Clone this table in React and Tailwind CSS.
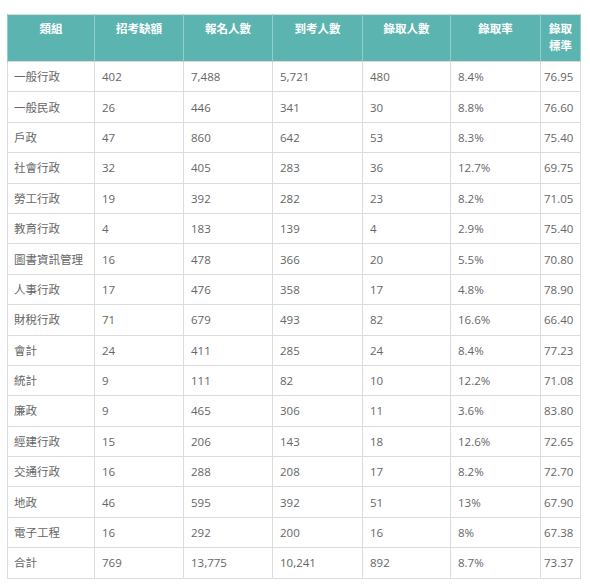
const rows = [
  ["一般行政", "402", "7,488", "5,721", "480", "8.4%", "76.95"],
  ["一般民政", "26", "446", "341", "30", "8.8%", "76.60"],
  ["戶政", "47", "860", "642", "53", "8.3%", "75.40"],
  ["社會行政", "32", "405", "283", "36", "12.7%", "69.75"],
  ["勞工行政", "19", "392", "282", "23", "8.2%", "71.05"],
  ["教育行政", "4", "183", "139", "4", "2.9%", "75.40"],
  ["圖書資訊管理", "16", "478", "366", "20", "5.5%", "70.80"],
  ["人事行政", "17", "476", "358", "17", "4.8%", "78.90"],
  ["財稅行政", "71", "679", "493", "82", "16.6%", "66.40"],
  ["會計", "24", "411", "285", "24", "8.4%", "77.23"],
  ["統計", "9", "111", "82", "10", "12.2%", "71.08"],
  ["廉政", "9", "465", "306", "11", "3.6%", "83.80"],
  ["經建行政", "15", "206", "143", "18", "12.6%", "72.65"],
  ["交通行政", "16", "288", "208", "17", "8.2%", "72.70"],
  ["地政", "46", "595", "392", "51", "13%", "67.90"],
  ["電子工程", "16", "292", "200", "16", "8%", "67.38"],
  ["合計", "769", "13,775", "10,241", "892", "8.7%", "73.37"],
];

const widths = ["w-[87px]", "w-[89px]", "w-[89px]", "w-[90px]", "w-[88px]", "w-[90px]", "w-[40px]"];

export default function App() {
  return (
    <div className="bg-white w-[590px] h-[588px] pt-[14px] pl-[7px]" style={{ fontFamily: '"Open Sans", "Noto Sans CJK TC", sans-serif' }}>
      <table className="border-collapse table-fixed w-[574px] border border-[#dcdcdc]">
        <colgroup>
          {widths.map((w, i) => (
            <col key={i} className={w} />
          ))}
        </colgroup>
        <thead>
          <tr className="bg-[#5bb4b0] text-white text-[11.5px] leading-[17px] font-semibold">
            {["類組", "招考缺額", "報名人數", "到考人數", "錄取人數", "錄取率"].map((h) => (
              <th key={h} className="align-top pt-[5px] pb-[7px] px-1 font-semibold border-x border-[#8fd0cc] text-center">
                {h}
              </th>
            ))}
            <th className="align-top pt-[5px] pb-[7px] px-0 font-semibold border-x border-[#8fd0cc] text-center">
              錄取
              <br />
              標準
            </th>
          </tr>
        </thead>
        <tbody>
          {rows.map((r, i) => (
            <tr key={i} className="h-[30.4px] text-[11.5px] text-[#666] leading-[17px]">
              {r.map((c, j) => (
                <td
                  key={j}
                  className={`border border-[#dcdcdc] align-middle whitespace-nowrap ${j === 6 ? "px-[3px]" : j === 0 ? "px-[6px]" : "px-[7px]"}`}
                >
                  {c}
                </td>
              ))}
            </tr>
          ))}
        </tbody>
      </table>
    </div>
  );
}
